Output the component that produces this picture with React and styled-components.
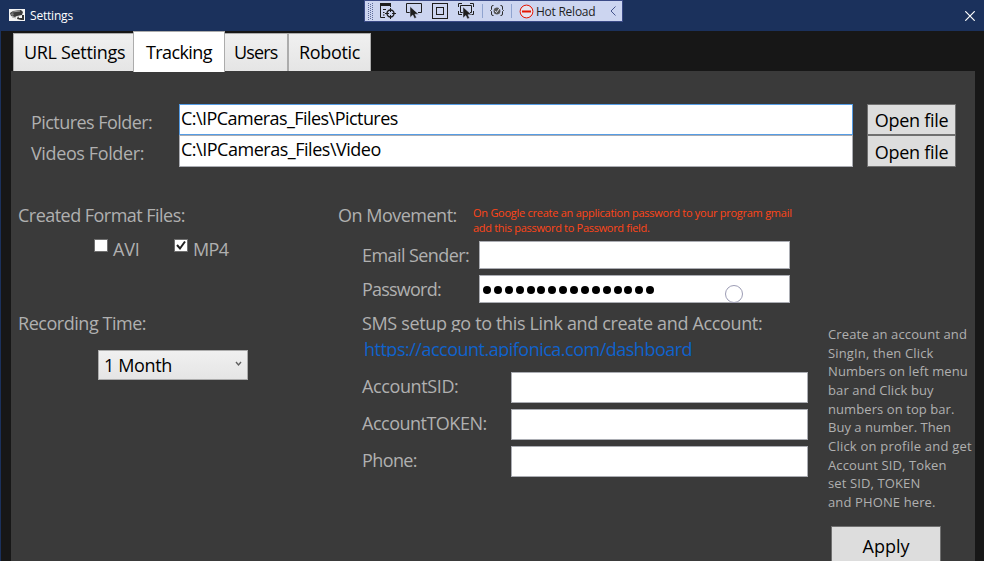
import React from 'react';
import styled, { createGlobalStyle } from 'styled-components';

const GlobalStyle = createGlobalStyle`
  * { box-sizing: border-box; }
  body { margin: 0; background: #171717; overflow: hidden; }
`;

const Window = styled.div`
  display: flex;
  flex-direction: column;
  width: 984px;
  height: 561px;
  overflow: hidden;
  background: #171717;
  border-left: 1px solid #1b315c;
  font-family: "Open Sans", "Noto Sans", sans-serif;
  font-size: 18px;
  line-height: 24px;
  color: #b0b0b0;
`;

const TitleBar = styled.header`
  position: relative;
  display: flex;
  align-items: center;
  flex: none;
  height: 31px;
  padding: 0 9px 0 8px;
  background: #1b315c;
  color: #fff;
`;

const AppIcon = styled.svg`
  display: block;
  margin-top: -1px;
`;

const WindowTitle = styled.h1`
  flex: 1;
  margin: 0 0 0 5px;
  font-size: 12px;
  font-weight: 400;
  line-height: 20px;
  letter-spacing: -0.2px;
`;

const CloseButton = styled.button`
  display: flex;
  padding: 0;
  border: 0;
  background: none;
`;

const DebugToolbar = styled.div`
  position: absolute;
  left: 363px;
  top: 0;
  display: flex;
  align-items: center;
  width: 259px;
  height: 22px;
  border: 1px solid #3a4a86;
  background: #ccd5f0;
  color: #1e1e1e;
`;

const ToolbarIcon = styled.svg`
  flex: none;
  margin-left: ${(p) => p.$gap || 0}px;
`;

const Separator = styled.span`
  width: 1px;
  height: 14px;
  margin-left: ${(p) => p.$gap}px;
  background: #8fa3cf;
`;

const ReloadLabel = styled.span`
  width: 72px;
  margin-left: 2px;
  padding-top: 2px;
  font-size: 12px;
  line-height: 20px;
  letter-spacing: -0.25px;
  white-space: nowrap;
`;

const Text = styled.span`
  display: block;
  letter-spacing: ${(p) => p.$track || 0}px;
  white-space: nowrap;
`;

const TabBar = styled.nav`
  display: flex;
  align-items: flex-end;
  flex: none;
  height: 40px;
  padding-left: 12px;
`;

const Tab = styled.button`
  position: relative;
  display: flex;
  flex: none;
  width: ${(p) => p.$width}px;
  height: ${(p) => (p.$active ? 41 : 38)}px;
  margin: 0 ${(p) => (p.$active ? '-1px -1px -1px' : '0 0 0')};
  z-index: ${(p) => (p.$active ? 1 : 0)};
  padding: ${(p) => (p.$active ? 8 : 6)}px 0 0 ${(p) => p.$inset}px;
  border: 1px solid #acacac;
  border-bottom: 0;
  background: ${(p) => (p.$active ? '#fff' : 'linear-gradient(#f0f0f0, #e5e5e5)')};
  color: #000;
  font: inherit;
`;

const Panel = styled.main`
  flex: 1;
  min-height: 0;
  margin: 0 9px 0 10px;
  padding-top: 33px;
  background: #3a3a3a;
`;

const Folders = styled.section`
  display: grid;
  grid-template-columns: 148px 674px 103px;
  grid-template-rows: 31px 32px;
  padding-left: 20px;
`;

const FolderLabel = styled.label`
  padding-top: 6px;
`;

const Field = styled.div`
  display: flex;
  width: ${(p) => (p.$width ? `${p.$width}px` : 'auto')};
  height: ${(p) => (p.$height ? `${p.$height}px` : 'auto')};
  padding: ${(p) => p.$pad || '1px'};
  border: 1px solid ${(p) => (p.$focused ? '#569de5' : '#abadb3')};
  background: #fff;
  color: #000;
`;

const Button = styled.button`
  display: flex;
  justify-content: center;
  padding: ${(p) => p.$top}px 0 0;
  border: 1px solid #707070;
  background: #ddd;
  color: #000;
  font: inherit;
`;

const OpenButton = styled(Button)`
  width: 89px;
  margin-left: 14px;
`;

const Columns = styled.div`
  display: grid;
  grid-template-columns: 320px 490px 147px;
  padding-left: 7px;
`;

const Formats = styled.section`
  padding-top: 36px;
`;

const CheckRow = styled.div`
  display: flex;
  margin: 10px 0 50px 76px;
`;

const Check = styled.label`
  display: flex;
  width: 80px;
`;

const CheckBox = styled.span`
  display: flex;
  width: 14px;
  height: 13px;
  margin: 2px 5px 0 0;
  border: 1px solid #707070;
  background: #fff;
`;

const Select = styled.div`
  display: flex;
  justify-content: space-between;
  width: 150px;
  height: 30px;
  margin: 15px 0 0 80px;
  padding: 2px 5px 0;
  border: 1px solid #acacac;
  background: linear-gradient(#f0f0f0, #e5e5e5);
  color: #000;
`;

const Movement = styled.section`
  padding-top: 36px;
`;

const MovementHead = styled.div`
  display: flex;
  height: 38px;
`;

const Warning = styled.p`
  margin: 2px 0 0;
  color: #ff4518;
  font-size: 11px;
  line-height: 15px;
`;

const MovementTitle = styled.div`
  width: 135px;
`;

const FormRow = styled.div`
  display: grid;
  grid-template-columns: ${(p) => p.$label}px auto;
  justify-content: start;
  margin: 0 0 6px 24px;
`;

const RowLabel = styled.label`
  padding-top: 2px;
`;

const PasswordDots = styled.div`
  display: flex;
  align-items: center;
  gap: 2.88px;
  padding-top: 2px;
`;

const Dot = styled.span`
  width: 8px;
  height: 8px;
  border-radius: 50%;
  background: #000;
`;

const PasswordField = styled(Field)`
  position: relative;
`;

const PointerRing = styled.span`
  position: absolute;
  left: 245px;
  top: 9px;
  width: 18px;
  height: 18px;
  border: 1px solid #9c9cb4;
  border-radius: 50%;
`;

const ClippedLine = styled.div`
  height: ${(p) => p.$height}px;
  margin: ${(p) => p.$margin};
  overflow: hidden;
`;

const Link = styled.a`
  color: #0f62cc;
  text-decoration: none;
`;

const Aside = styled.aside`
  padding-top: 158px;
`;

const Help = styled.p`
  margin: 0 0 14px;
  font-size: 13px;
  line-height: 18.67px;
`;

const ApplyButton = styled(Button)`
  width: 110px;
  height: 42px;
  margin-left: 3px;
`;

const HELP_LINES = [
  ['Create an account and', 0.12],
  ['SingIn, then Click', 0.15],
  ['Numbers on left menu', 0.13],
  ['bar and Click buy', 0.1],
  ['numbers on top bar.', 0.08],
  ['Buy a number. Then', 0.02],
  ['Click on profile and get', 0.22],
  ['Account SID, Token', 0.12],
  ['set SID, TOKEN', 0.12],
  ['and PHONE here.', 0.12],
];

function CameraIcon() {
  return (
    <AppIcon width="16" height="12" viewBox="0 0 16 12">
      <rect width="16" height="12" fill="#f4f4f4" />
      <path d="M1 4L4 2l8-1 2 2-1 3-5 1-2 1-4-1z" fill="#3c3c3c" />
      <path d="M3 3l8-1" stroke="#999" />
      <circle cx="3.3" cy="5.5" r="1.4" fill="#777" />
      <path d="M9 7l1 2h3V6l2 0v5h-3l-4-1z" fill="#333" />
      <path d="M3 8l4 1" stroke="#aaa" />
    </AppIcon>
  );
}

function CursorArrow({ x, y }) {
  return (
    <path
      transform={`translate(${x} ${y})`}
      d="M0 0v11l2.8-2.5 1.7 3.5 2-.9-1.6-3.4h3.7z"
      fill="#1e1e1e"
      stroke="#ccd5f0"
      strokeWidth=".5"
    />
  );
}

function Grip() {
  const dots = [];
  for (let y = 0; y < 17; y++) {
    const columns = y % 2 ? [2] : [0, 4];
    columns.forEach((x) => dots.push(<rect key={`${x}-${y}`} x={x} y={y} width="1" height="1" />));
  }
  return <ToolbarIcon $gap={3} width="5" height="17" fill="#5d6b99">{dots}</ToolbarIcon>;
}

function HotReloadBar() {
  return (
    <DebugToolbar>
      <Grip />
      <ToolbarIcon $gap={7} width="16" height="16" fill="none" stroke="#1e1e1e">
        <path d="M0 1.5h11" strokeWidth="3" />
        <path d="M.5 1v13.5H5M10.5 1v3" />
        <path d="M3 6.5h3M3 9.5h1.5M3 12h1.5" />
        <circle cx="10.5" cy="10.5" r="3.5" strokeWidth="1.4" />
        <path d="M10.5 5v4M10.5 12v4M5 10.5h4M12 10.5h4" />
      </ToolbarIcon>
      <ToolbarIcon $gap={10} width="16" height="16" fill="none" stroke="#1e1e1e">
        <path d="M4 9.5H.5v-9h15v9H12" />
        <CursorArrow x={4} y={3.5} />
      </ToolbarIcon>
      <ToolbarIcon $gap={10} width="16" height="16" fill="none" stroke="#1e1e1e">
        <rect x=".5" y=".5" width="15" height="15" />
        <rect x="4.5" y="4.5" width="7" height="7" />
      </ToolbarIcon>
      <ToolbarIcon $gap={10} width="16" height="16" fill="none" stroke="#1e1e1e">
        <path d="M.5 4V.5H4M12 .5h3.5V4M.5 8v3.5H4M15.5 8v3.5H12M5 9.5H2.5v-7h11v7H12" />
        <CursorArrow x={5} y={4} />
      </ToolbarIcon>
      <Separator $gap={8} />
      <ToolbarIcon $gap={7} width="14" height="12" fill="none" stroke="#2b2b2b">
        <path d="M3.5.5H3Q1.5.5 1.5 2v2.5L.5 5.5l1 1V9q0 1.5 1.5 1.5h.5M10.5.5h.5q1.5 0 1.5 1.5v2.5l1 1-1 1V9q0 1.5-1.5 1.5h-.5" />
        <circle cx="7" cy="6" r="3.2" fill="#555" stroke="#555" strokeWidth=".5" />
        <path d="M5 5.8l1.5 1.7L9.8 3" stroke="#e4e8f6" />
      </ToolbarIcon>
      <Separator $gap={7} />
      <ToolbarIcon $gap={7} width="15" height="15" fill="none">
        <circle cx="7.5" cy="7.5" r="6.4" stroke="#e51400" fill="#e6e4ee" />
        <rect x="3" y="6.5" width="9" height="2" fill="#e51400" />
      </ToolbarIcon>
      <ReloadLabel>Hot Reload</ReloadLabel>
      <ToolbarIcon $gap={2} width="7" height="10" fill="none" stroke="#45558c">
        <path d="M5.5.5L1 5l4.5 4.5" />
      </ToolbarIcon>
    </DebugToolbar>
  );
}

export default function App() {
  return (
    <>
      <GlobalStyle />
      <Window>
        <TitleBar>
          <CameraIcon />
          <WindowTitle>Settings</WindowTitle>
          <HotReloadBar />
          <CloseButton aria-label="Close">
            <svg width="10" height="10" viewBox="0 0 10 10" stroke="#fff" strokeWidth="1.2">
              <path d="M.3.3l9.4 9.4M9.7.3L.3 9.7" />
            </svg>
          </CloseButton>
        </TitleBar>

        <TabBar>
          <Tab $width={121} $inset={10}><Text $track={-0.32}>URL Settings</Text></Tab>
          <Tab $width={92} $inset={12} $active><Text $track={-0.6}>Tracking</Text></Tab>
          <Tab $width={64} $inset={9}><Text $track={-0.85}>Users</Text></Tab>
          <Tab $width={83} $inset={10}><Text $track={-0.35}>Robotic</Text></Tab>
        </TabBar>

        <Panel>
          <Folders>
            <FolderLabel><Text $track={-0.55}>Pictures Folder:</Text></FolderLabel>
            <Field $focused><Text $track={-0.55}>C:\IPCameras_Files\Pictures</Text></Field>
            <OpenButton $top={3}><Text $track={-0.3}>Open file</Text></OpenButton>
            <FolderLabel><Text $track={-0.38}>Videos Folder:</Text></FolderLabel>
            <Field><Text $track={-0.48}>C:\IPCameras_Files\Video</Text></Field>
            <OpenButton $top={4}><Text $track={-0.3}>Open file</Text></OpenButton>
          </Folders>

          <Columns>
            <Formats>
              <Text $track={-0.53}>Created Format Files:</Text>
              <CheckRow>
                <Check>
                  <CheckBox />
                  <Text $track={-0.2}>AVI</Text>
                </Check>
                <Check>
                  <CheckBox>
                    <svg width="12" height="11" fill="none" stroke="#212121" strokeWidth="2">
                      <path d="M2 5l3 3.5 5-7" />
                    </svg>
                  </CheckBox>
                  <Text $track={-0.6}>MP4</Text>
                </Check>
              </CheckRow>
              <Text $track={-0.46}>Recording Time:</Text>
              <Select>
                <Text $track={-0.35}>1 Month</Text>
                <svg width="7" height="24" fill="none" stroke="#606060" strokeWidth="1.4">
                  <path d="M1 9l2.5 3L6 9" />
                </svg>
              </Select>
            </Formats>

            <Movement>
              <MovementHead>
                <MovementTitle><Text $track={-0.5}>On Movement:</Text></MovementTitle>
                <Warning>
                  <Text $track={-0.26}>On Google create an application password to your program gmail</Text>
                  <Text $track={-0.3}>add this password to Password field.</Text>
                </Warning>
              </MovementHead>
              <FormRow $label={117}>
                <RowLabel><Text $track={-0.58}>Email Sender:</Text></RowLabel>
                <Field $width={311} $height={28} />
              </FormRow>
              <FormRow $label={117}>
                <RowLabel><Text $track={-0.78}>Password:</Text></RowLabel>
                <PasswordField $width={311} $height={28} $pad="0 3px">
                  <PasswordDots>
                    {Array.from({ length: 16 }, (_, i) => <Dot key={i} />)}
                  </PasswordDots>
                  <PointerRing />
                </PasswordField>
              </FormRow>
              <ClippedLine $height={21} $margin="8px 0 5px 24px">
                <Text $track={-0.35}>SMS setup go to this Link and create and Account:</Text>
              </ClippedLine>
              <ClippedLine $height={20} $margin="0 0 15px 26px">
                <Link><Text $track={-0.5}>https://account.apifonica.com/dashboard</Text></Link>
              </ClippedLine>
              <FormRow $label={149}>
                <RowLabel><Text $track={-0.38}>AccountSID:</Text></RowLabel>
                <Field $width={297} $height={31} />
              </FormRow>
              <FormRow $label={149}>
                <RowLabel><Text $track={-0.5}>AccountTOKEN:</Text></RowLabel>
                <Field $width={297} $height={31} />
              </FormRow>
              <FormRow $label={149}>
                <RowLabel><Text $track={-0.6}>Phone:</Text></RowLabel>
                <Field $width={297} $height={31} />
              </FormRow>
            </Movement>

            <Aside>
              <Help>
                {HELP_LINES.map(([line, track]) => <Text key={line} $track={track}>{line}</Text>)}
              </Help>
              <ApplyButton $top={7}><Text>Apply</Text></ApplyButton>
            </Aside>
          </Columns>
        </Panel>
      </Window>
    </>
  );
}
